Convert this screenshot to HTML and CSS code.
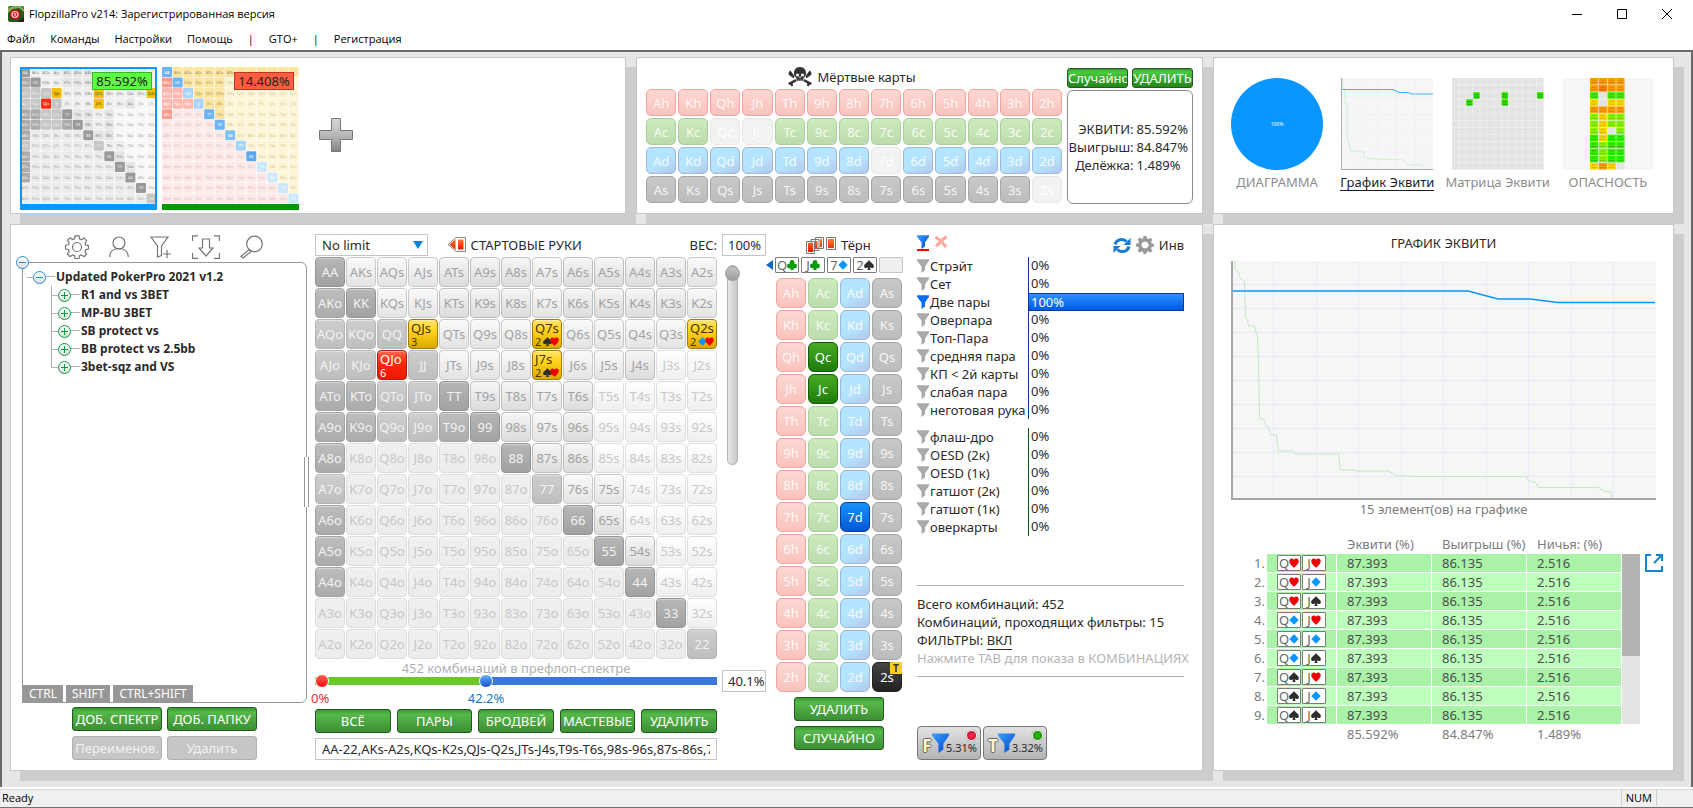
FILE: index.html
```html
<!DOCTYPE html>
<html lang="ru">
<head>
<meta charset="utf-8">
<title>FlopzillaPro v214</title>
<link rel="stylesheet" href="styles.css">
</head>
<body>
<svg class="defs" aria-hidden="true">
  <defs>
    <linearGradient id="g-blue" x1="0" y1="0" x2="1" y2="1"><stop offset="0" stop-color="#3aa0ff"/><stop offset="1" stop-color="#0046c8"/></linearGradient>
    <linearGradient id="g-red" x1="0" y1="0" x2="0" y2="1"><stop offset="0" stop-color="#ff7a2a"/><stop offset="1" stop-color="#e01800"/></linearGradient>
    <linearGradient id="g-plus" x1="0" y1="0" x2="0" y2="1"><stop offset="0" stop-color="#d6d6d6"/><stop offset=".5" stop-color="#b8b8b8"/><stop offset="1" stop-color="#858585"/></linearGradient>
  </defs>
  <symbol id="h" viewBox="0 0 10 10"><path fill="#f00000" d="M5 9.8C3.500 8 .3 6 .3 3.200 .3 .2 3.900-.3 5 2 6.100-.3 9.700.2 9.700 3.200 9.700 6 6.500 8 5 9.800z"/></symbol>
  <symbol id="d" viewBox="0 0 10 10"><path fill="#0a96ff" d="M5 .3 9.700 5 5 9.700.3 5z"/></symbol>
  <symbol id="s" viewBox="0 0 10 10"><path fill="#2e2e2e" d="M5 .1C6 2 9.900 4 9.900 6.200c0 2-2.700 2.500-4.100 1.100l.8 2.600H3.400l.8-2.600C2.800 8.700.1 8.200.1 6.200.1 4 4 2 5 .1z"/></symbol>
  <symbol id="c" viewBox="0 0 10 10"><g fill="#0a9a0a"><circle cx="5" cy="2.500" r="2.400"/><circle cx="2.400" cy="6" r="2.400"/><circle cx="7.600" cy="6" r="2.400"/><path d="M4.200 4h1.600l.9 5.900H3.300z"/></g></symbol>
  <symbol id="funnel" viewBox="0 0 12 14"><path d="M0 .3h12v1.400L8 7.500v4l-3.500 2.500V7.500L0 1.700z"/></symbol>
</svg>

<header class="titlebar">
  <svg class="logo" viewBox="0 0 16 16"><rect width="16" height="16" rx="2" fill="#1e5a1e"/><path d="M0 2 5 0h8l3 3v3L11 2 5 3 0 7z" fill="#7fae4e"/><circle cx="7" cy="8.500" r="5.500" fill="#b01616"/><circle cx="7" cy="8.500" r="3.600" fill="#f4dcdc"/><circle cx="7" cy="8.500" r="2.400" fill="#d02020"/><path d="M7 7v3" stroke="#fff"/><path d="M9 16l7-5v5z" fill="#2f2015"/></svg>
  <span class="title">FlopzillaPro v214: Зарегистрированная версия</span>
  <div class="winctl">
    <button aria-label="Свернуть"><svg viewBox="0 0 12 12"><path d="M1 6.500h10"/></svg></button>
    <button aria-label="Развернуть"><svg viewBox="0 0 12 12"><path d="M1.500 1.500h9v9h-9z"/></svg></button>
    <button aria-label="Закрыть"><svg viewBox="0 0 12 12"><path d="M1 1l10 10M11 1L1 11"/></svg></button>
  </div>
</header>
<nav class="menu">
  <button>Файл</button><button>Команды</button><button>Настройки</button><button>Помощь</button><span>|</span><button>GTO+</button><span>|</span><button>Регистрация</button>
</nav>

<main class="work">
  <section class="panel players">
    <button class="thumb selected"><svg id="thumb1" viewBox="0 0 137 137"></svg><span class="eq eq-win">85.592%</span></button>
    <button class="thumb"><svg id="thumb2" viewBox="0 0 137 137"></svg><span class="eq eq-lose">14.408%</span></button>
    <button class="add" aria-label="Добавить"><svg viewBox="0 0 34 34"><path d="M12.500.500h9v12h12v9h-12v12h-9v-12H.500v-9h12z" fill="url(#g-plus)" stroke="#777"/></svg></button>
  </section>

  <section class="panel dead">
    <div class="deadmain">
      <h2 class="deadtitle"><svg viewBox="0 0 24 20"><g fill="#333"><path d="M12 0C7.500 0 6 3 6 6.500c0 2 .4 3 1.500 3.800l1 .7v3h7v-3l1-.7C17.600 9.500 18 8.500 18 6.500 18 3 16.500 0 12 0z"/><path d="M3 14.500 7.500 12l1 2.200L4.600 16.400l.6 2-1.600 1.200-1-1.600-2.200-.4.300-2zM21 14.500 16.500 12l-1 2.200 3.900 2.200-.6 2 1.600 1.200 1-1.600 2.200-.4-.3-2z"/><path d="M1 4.500l1.500-.8 1.500 1.800 2 3v3L3 9.500.500 7.500zM23 4.500l-1.500-.8L20 5.500l-2 3v3l3-2 2.500-2z"/></g><g fill="#fff"><circle cx="9.500" cy="8" r="1.600"/><circle cx="14.500" cy="8" r="1.600"/><path d="M12 9l1 2h-2zM9.800 12.500h.7V14h-.7zM11.700 12.500h.7V14h-.7zM13.600 12.500h.7V14h-.7z"/></g></svg>Мёртвые карты</h2>
      <div class="deadgrid" id="dead"></div>
    </div>
    <div class="deadside">
      <div class="pair"><button class="btn bright">Случайно</button><button class="btn bright">УДАЛИТЬ</button></div>
      <dl class="eqbox"><dt>ЭКВИТИ:</dt><dd>85.592%</dd><dt>Выигрыш:</dt><dd>84.847%</dd><dt>Делёжка:</dt><dd>1.489%</dd></dl>
    </div>
  </section>

  <section class="panel views">
    <button class="view"><svg viewBox="0 0 92 92"><circle cx="46" cy="46" r="46" fill="#0a96ff"/><text x="46" y="48" font-size="5" fill="#fff" text-anchor="middle">100%</text></svg><span>ДИАГРАММА</span></button>
    <button class="view active"><svg viewBox="0 0 92 92"><path fill="#f6f6f6" d="M0 0h92v92H0z"/><path d="M19 0v92M37 0v92M55 0v92M74 0v92M0 19h92M0 37h92M0 55h92M0 74h92" stroke="#efeff5"/><path d="M1 0l1 9 2 4v12l2 1v30l2 9 2 8h13v7l12 1 28 1 4 5h14l3 4" fill="none" stroke="#d3ecd3"/><path d="M0 11.500h52l6 3h9l4 1.500h21" fill="none" stroke="#4db2f5" stroke-width="1.200"/><path d="M.5 0v91.500H92" fill="none" stroke="#aaa"/></svg><span>График Эквити</span></button>
    <button class="view"><svg id="matrix" viewBox="0 0 92 92"></svg><span>Матрица Эквити</span></button>
    <button class="view"><svg id="danger" viewBox="0 0 92 92"></svg><span>ОПАСНОСТЬ</span></button>
  </section>

  <section class="panel editor">
    <div class="treecol">
      <div class="tools">
        <button aria-label="Настройки"><svg viewBox="0 0 24 24"><circle cx="12" cy="12" r="4.500"/><path d="M10 .8h4l.5 3 2 .9 2.600-1.700 2.500 2.700-1.600 2.500.8 2 2.700.3v3.600l-2.800.5-.8 2 1.600 2.500-2.500 2.600-2.500-1.700-2 .8-.5 2.700h-4l-.5-2.800-2-.8-2.500 1.700-2.600-2.600L4.100 16.500l-.9-2-2.600-.5v-3.800l2.700-.4.900-2L2.500 5.300l2.600-2.500 2.400 1.700 2-.8z"/></svg></button>
        <button aria-label="Профиль"><svg viewBox="0 0 20 24"><circle cx="10" cy="8" r="6"/><path d="M.8 22c0-5 3-8.500 9.200-8.500s9.200 3.500 9.200 8.500"/></svg></button>
        <button aria-label="Новый фильтр"><svg viewBox="0 0 22 24"><path d="M1 2h17l-6.500 9v9.500L7.500 22V11zM17 15v8M13 19h8"/></svg></button>
        <button aria-label="Импорт"><svg viewBox="0 0 28 24"><path d="M.5 6V.8H6M22 .8h5.500V6M27.500 18v5.300H22M6 23.300H.5V18M10.500 4h7v9h3.500l-7 8-7-8h3.500z"/></svg></button>
        <button aria-label="Поиск"><svg viewBox="0 0 24 24"><circle cx="14.500" cy="9" r="7.800"/><path d="M9 14.500l2 2-8 6.500-2-1.500z"/></svg></button>
      </div>
      <div class="treebox">
        <button class="node minus corner" aria-label="Свернуть всё"></button>
        <ul class="tree">
          <li class="root"><button class="node minus" aria-label="Свернуть"></button><b>Updated PokerPro 2021 v1.2</b>
            <ul>
              <li><button class="node plus" aria-label="Развернуть"></button><b>R1 and vs 3BET</b></li>
              <li><button class="node plus" aria-label="Развернуть"></button><b>MP-BU 3BET</b></li>
              <li><button class="node plus" aria-label="Развернуть"></button><b>SB protect vs</b></li>
              <li><button class="node plus" aria-label="Развернуть"></button><b>BB protect vs 2.5bb</b></li>
              <li><button class="node plus" aria-label="Развернуть"></button><b>3bet-sqz and VS</b></li>
            </ul>
          </li>
        </ul>
        <div class="keys"><span>CTRL</span><span>SHIFT</span><span>CTRL+SHIFT</span></div>
        <i class="grip"></i>
      </div>
      <div class="treebtns">
        <button class="btn">ДОБ. СПЕКТР</button><button class="btn">ДОБ. ПАПКУ</button>
        <button class="btn off" disabled>Переименов.</button><button class="btn off" disabled>Удалить</button>
      </div>
    </div>

    <div class="rangecol">
      <div class="rangehead">
        <div class="limitbox"><select class="limit" aria-label="Лимит"><option>No limit</option></select></div>
        <h2><svg viewBox="0 0 18 16"><path d="M8 .5h9.500v14H8l-8-7z" fill="#fff" stroke="#888"/><path d="M7.500 2v11L1.500 7.500z" fill="url(#g-red)"/><path d="M10 2.500h5.500v10H10z" fill="url(#g-red)"/></svg>СТАРТОВЫЕ РУКИ</h2>
        <label for="weight">ВЕС:</label>
      </div>
      <div class="hands" id="hands"></div>
      <p class="combos">452 комбинаций в префлоп-спектре</p>
      <div class="dual">
        <input type="range" class="low" min="0" max="1000" value="0" aria-label="Нижняя граница">
        <input type="range" class="high" min="0" max="1000" value="422" aria-label="Верхняя граница">
      </div>
      <div class="duallabels"><span class="lo">0%</span><span class="hi">42.2%</span></div>
      <div class="rangebtns"><button class="btn">ВСЁ</button><button class="btn">ПАРЫ</button><button class="btn">БРОДВЕЙ</button><button class="btn">МАСТЕВЫЕ</button><button class="btn">УДАЛИТЬ</button></div>
      <input class="field rangetext" aria-label="Спектр" value="AA-22,AKs-A2s,KQs-K2s,QJs-Q2s,JTs-J4s,T9s-T6s,98s-96s,87s-86s,76s-75s,65s,54s">
    </div>

    <div class="weightcol">
      <input class="field" id="weight" value="100%">
      <input type="range" class="vert" min="0" max="100" value="0" aria-label="Вес">
      <input class="field percent" aria-label="Процент рук" value="40.1%">
    </div>

    <div class="boardcol">
      <h2 class="street"><svg viewBox="0 0 30 17"><g fill="#fff" stroke="#777"><path d="M9.500.500h8v11h-8zM5 2.500h8v11H5zM.5 4.500h8v12h-8zM20.500.500h9v12h-9z"/></g><g fill="url(#g-red)"><path d="M14 2h2v8h-2zM9.500 4h2v8h-2zM2 6h5v9H2zM22 2h6v9h-6z"/></g></svg>Тёрн</h2>
      <div class="boardcards">
        <button class="back" aria-label="Назад"></button>
        <span class="card">Q<svg><use href="#c"/></svg></span><span class="card">J<svg><use href="#c"/></svg></span><span class="card">7<svg><use href="#d"/></svg></span><span class="card">2<svg><use href="#s"/></svg></span><span class="card empty"></span>
      </div>
      <div class="boardgrid" id="board"></div>
      <button class="btn wide">УДАЛИТЬ</button>
      <button class="btn wide">СЛУЧАЙНО</button>
    </div>

    <div class="filtercol">
      <div class="filterhead">
        <button class="blueline" aria-label="Фильтр"><svg viewBox="0 0 12 14" fill="url(#g-blue)"><use href="#funnel"/></svg></button>
        <button aria-label="Сбросить"><svg class="cross" viewBox="0 0 14 13"><path d="M1.500 2C5 4 9 8 12 12M12.500 1.500C9 4 5 8 2 11.500"/></svg></button>
        <button class="end" aria-label="Обновить"><svg class="sync" viewBox="0 0 18 17"><path d="M2 7.500C3.500 2 10.500 1 13.500 4.500M16 9.500C14.500 15 7.500 16 4.500 12.500" fill="none" stroke="#1a7ad2" stroke-width="3"/><path d="M17.500 1v7h-7zM.5 16V9h7z" fill="#1a7ad2"/></svg></button>
        <button aria-label="Параметры"><svg class="cog" viewBox="0 0 18 18"><path fill="#999" fill-rule="evenodd" d="M7.500 0h3l.5 2.500 1.500.6L14.600 1.700l1.900 2-1.400 2.100.7 1.600 2.200.4v2.800l-2.300.5-.7 1.500 1.400 2.100-2 2-2.100-1.400-1.600.7-.4 2.200H7.600l-.5-2.300-1.500-.7-2.100 1.400-2-2 1.400-2.100-.6-1.500L0 10.500V7.700l2.400-.5.600-1.500-1.400-2.100 2-2L5.700 3l1.400-.6zM9 5.500a3.500 3.500 0 1 0 .1 0z"/></svg></button>
        <span>Инв</span>
      </div>
      <ul class="filters made" id="made"></ul>
      <ul class="filters draws" id="draws"></ul>
      <div class="summary">
        <p>Всего комбинаций: 452</p>
        <p>Комбинаций, проходящих фильтры: 15</p>
        <p>ФИЛЬТРЫ: <a href="#">ВКЛ</a></p>
        <p class="hint">Нажмите ТАВ для показа в КОМБИНАЦИЯХ</p>
      </div>
      <div class="ftbtns">
        <button class="ft"><b>F</b><svg viewBox="0 0 12 14" fill="url(#g-blue)"><use href="#funnel"/></svg><i class="led red"></i><span>5.31%</span></button>
        <button class="ft"><b>T</b><svg viewBox="0 0 12 14" fill="url(#g-blue)"><use href="#funnel"/></svg><i class="led green"></i><span>3.32%</span></button>
      </div>
    </div>
  </section>

  <section class="panel chartpanel">
    <h2>ГРАФИК ЭКВИТИ</h2>
    <svg class="chart" viewBox="0 0 425 239" preserveAspectRatio="none">
      <path d="M0 0h425v239H0z" fill="#f6f6f6"/>
      <path d="M42.500 0v238M85.500 0v238M127.500 0v238M170.500 0v238M212.500 0v238M255.500 0v238M297.500 0v238M340.500 0v238M382.500 0v238M0 23.500h425M0 47.500h425M0 71.500h425M0 95.500h425M0 119.500h425M0 143.500h425M0 167.500h425M0 191.500h425M0 215.500h425" stroke="#e9e9f8"/>
      <path d="M3.500 0 4.500 9l3 2 2 7 4 2 1 37 2 2 1 6h6l2 8 1 2 1 27 1 55 1 1h3l2 6 3 2 2 8h6l2 16h14l2 3h44l2 16h14l2 1h31l5 2 3 3h15l1 .5h115l2 4 7 2 3 5h60l6 4h6l2 6" fill="none" stroke="#c3e6c3"/>
      <path d="M2 30h235l30 8h32l28 3.500h97" fill="none" stroke="#0a96ff" stroke-width="1.500"/>
      <path d="M1 0v238h424" fill="none" stroke="#a6a6a6" stroke-width="2"/>
    </svg>
    <p class="caption">15 элемент(ов) на графике</p>
    <div class="results">
      <table>
        <thead><tr><th></th><th></th><th>Эквити (%)</th><th>Выигрыш (%)</th><th>Ничья: (%)</th></tr></thead>
        <tbody id="rows"></tbody>
        <tfoot><tr><td></td><td></td><td>85.592%</td><td>84.847%</td><td>1.489%</td></tr></tfoot>
      </table>
      <div class="scroll"><i></i></div>
      <button class="popout" aria-label="Открыть отдельно"><svg viewBox="0 0 18 18"><path d="M6 1H1v16h16v-5M17 7V1h-6M17 1 9 9" fill="none" stroke="#1583d4" stroke-width="2"/></svg></button>
    </div>
  </section>
</main>

<footer class="status"><span>Ready</span><span class="num">NUM</span></footer>
<script src="script.js"></script>
</body>
</html>
```
FILE: styles.css
```css
* { box-sizing: border-box; }
body { margin: 0; min-height: 100vh; display: flex; flex-direction: column; background: #fff; color: #2a2a2a; font: 13px/18px "Noto Sans", "Open Sans", sans-serif; }
button { font: inherit; color: inherit; padding: 0; margin: 0; border: 0; background: none; }
input, select { font: inherit; color: inherit; margin: 0; }
h2, p, ul, dl, dd { margin: 0; padding: 0; font-size: 13px; font-weight: 400; list-style: none; }
svg { display: block; flex: none; }
.defs { position: absolute; width: 0; height: 0; }

.titlebar { display: flex; align-items: center; height: 28px; padding: 0 20px 0 8px; gap: 5px; color: #000; font: 11px/16px "Open Sans", sans-serif; }
.logo { width: 16px; height: 16px; }
.winctl { display: flex; gap: 33px; margin-left: auto; }
.winctl svg { width: 12px; height: 12px; fill: none; stroke: #000; }
.menu { display: flex; align-items: center; height: 22px; padding: 0 8px 0 7px; gap: 15px; color: #000; font: 11px/16px "Open Sans", sans-serif; }

.work { flex: 1; display: grid; grid-template-columns: 616fr 567fr 461fr; grid-template-rows: auto 1fr; gap: 10px; padding: 5px 17px 16px 8px; background: #e6e6e6; border: 2px solid #696969; border-bottom: 0; box-shadow: inset 0 1px #f0f0f0; }
.panel { min-width: 0; background: #fff; border: 1px solid #c8c8c8; box-shadow: 10px 10px 0 #cdcdcd; }

.players { display: flex; align-items: flex-start; gap: 5px; padding: 9px 9px 0; }
.thumb { position: relative; width: 137px; height: 143px; border-bottom: 6px solid #090; overflow: hidden; }
.thumb svg { width: 137px; height: 137px; }
.thumb.selected::after { content: ""; position: absolute; inset: 0; border: 2px solid #0a96ff; border-bottom: 0; }
.thumb.selected { border-color: #0a96ff; }
.thumb text { font: 4px "Noto Sans", sans-serif; text-anchor: middle; }
.eq { position: absolute; top: 5px; right: 5px; width: 60px; height: 18px; line-height: 16px; border: 1px solid; text-align: center; color: #222; }
.eq-win { background: #5cff40; border-color: #38b828; }
.eq-lose { background: #ff5c40; border-color: #b83828; }
.add { margin: 51px 0 0 15px; }
.add svg { width: 34px; height: 34px; }

.dead { display: flex; gap: 5px; padding: 9px; }
.deadmain { flex: 416; }
.deadside { flex: 126; }
.deadtitle { display: flex; justify-content: center; align-items: center; gap: 5px; height: 20px; margin-bottom: 2px; padding-right: 4px; }
.deadtitle svg { width: 24px; height: 20px; }
.deadgrid { display: grid; grid-template-columns: repeat(13, 1fr); grid-auto-rows: 27px; gap: 2px; }
.deadside .pair { display: grid; grid-template-columns: 1fr 1fr; gap: 4px; padding-top: 1px; }
.deadside .btn { height: 20px; line-height: 17px; }
.eqbox { display: grid; grid-template-columns: auto auto; justify-content: end; align-content: center; column-gap: 3px; height: 114px; margin-top: 2px; padding-right: 4px; border: 1px solid #8c8c8c; border-radius: 6px; }
.eqbox dt { text-align: right; }

.btn { height: 24px; border: 1px solid #24591d; border-radius: 3px; background: linear-gradient(#3a9c32, #55b84a 20%, #3d8f34); color: #fff; line-height: 20px; white-space: nowrap; overflow: hidden; box-shadow: inset 0 1px #3f9a36; }
.btn.bright { background: linear-gradient(#35b52c, #49c93c 20%, #23841b); }
.btn.off { border-color: #b0b0b0; background: #c6c6c6; color: #f2f2f2; box-shadow: none; }

.cell { min-width: 0; border: 1px solid; border-radius: 5px; line-height: 20px; color: #fffd; }
.cell.ch { background: linear-gradient(#ffd8d2, #f9c3be); border-color: #f0a3a1; }
.cell.cc { background: linear-gradient(#cdecbc, #bddcae); border-color: #a9cfa0; }
.cell.cd { background: linear-gradient(150deg, #b4e4ff 55%, #b4c6ee); border-color: #9bb8d4; }
.cell.cs { background: linear-gradient(#c8c8c8, #bcbcbc); border-color: #a6a6a6; }
.cell.none { background: #f2f2f2; border-color: #e8e8e8; color: #fff; }
.cell.on { color: #fff; position: relative; }
.cell.cc.on { background: linear-gradient(#48ac22, #1d7c0a); border-color: #155a08; }
.cell.cd.on { background: linear-gradient(#1591fb, #0557d6); border-color: #0a3f92; }
.cell.cs.on { background: linear-gradient(#444, #222); border-color: #222; }
.tag { position: absolute; top: -1px; right: -1px; width: 12px; height: 12px; background: #ffcc22; color: #333; font-size: 10px; font-weight: 700; line-height: 12px; text-align: center; }

.views { display: flex; justify-content: space-around; align-items: flex-start; padding: 20px 10px 0 8px; }
.view { display: flex; flex-direction: column; align-items: center; width: 104px; gap: 4px; color: #8c8c8c; white-space: nowrap; }
.view svg { width: 92px; height: 92px; }
.view span { line-height: 16px; border-bottom: 1px solid transparent; }
.view.active span { color: #1c1c1c; border-color: #1c1c1c; }
.view text { font-family: "Noto Sans", sans-serif; }

.editor { grid-column: 1 / 3; display: grid; grid-template-columns: 293fr 407fr 44fr 151fr 267fr; padding: 9px 18px 0 11px; }
.editor > div { min-width: 0; }
.treecol { padding-right: 8px; }
.tools { display: flex; justify-content: space-between; padding: 1px 43px 0; margin-bottom: 3px; }
.tools svg { height: 24px; fill: none; stroke: #757575; stroke-width: 1.2; }
.treebox { position: relative; display: flex; flex-direction: column; height: 441px; border: 1px solid #979797; border-radius: 0 6px 6px 0; }
.node { position: relative; flex: none; width: 13px; height: 13px; border: 1px solid #2490cc; border-radius: 50%; background: linear-gradient(#fff, #ddd); }
.node.plus { border-color: #0a9a3c; }
.node::before, .plus::after { content: ""; position: absolute; left: 2px; top: 5px; width: 7px; height: 1px; background: #2490cc; }
.plus::before, .plus::after { background: #0a9a3c; }
.plus::after { left: 5px; top: 2px; width: 1px; height: 7px; }
.node.corner { position: absolute; left: -7px; top: -7px; }
.tree { flex: 1; padding: 5px 0 0 4px; }
.tree b { font-size: 12px; line-height: 18px; }
.tree li { display: flex; flex-wrap: wrap; align-items: center; }
.tree .root::before { content: ""; width: 6px; border-top: 1px solid #b0b0b0; }
.root > b::before { content: ""; display: inline-block; width: 9px; margin-right: 1px; border-top: 1px solid #b0b0b0; vertical-align: 4px; }
.root ul { width: 100%; margin-left: 24px; background: linear-gradient(#b0b0b0, #b0b0b0) 0 0 / 1px 81px no-repeat; }
.root ul li { height: 18px; }
.root ul li::before { content: ""; width: 7px; border-top: 1px solid #b0b0b0; }
.root ul b::before { content: ""; display: inline-block; width: 9px; margin-right: 1px; border-top: 1px solid #b0b0b0; vertical-align: 4px; }
.keys { display: flex; gap: 3px; }
.keys span { height: 17px; padding: 0 6px; background: #979797; color: #fff; font-size: 12px; line-height: 17px; }
.grip { position: absolute; right: -3px; top: 194px; width: 5px; height: 50px; background: #fff; border: solid #979797; border-width: 0 1px; }
.treebtns { display: grid; grid-template-columns: 90px 90px; justify-content: center; gap: 5px; margin-top: 4px; }

.rangecol { padding-right: 5px; }
.rangehead { display: flex; align-items: center; justify-content: space-between; height: 22px; margin-bottom: 1px; }
.rangehead h2 { display: flex; align-items: center; gap: 5px; margin-right: 88px; }
.rangehead h2 svg { width: 18px; height: 16px; }
.limit, .field { height: 22px; border: 1px solid #c4c4c4; border-radius: 0; background: #fff; padding: 0 6px; min-width: 0; outline: 0; }
.limitbox { position: relative; height: 22px; }
.limitbox::after { content: ""; position: absolute; right: 5px; top: 7px; border: solid transparent; border-width: 8px 5px 0; border-top-color: #0a84d4; pointer-events: none; }
.limit { width: 113px; appearance: none; }
.hands { display: grid; grid-template-columns: repeat(13, 1fr); grid-auto-rows: 30px; gap: 1px; }
.hands .cell { border-radius: 4px; color: #a2a2a2; line-height: 26px; box-shadow: inset 0 1px #fff6; }
.hands .k-d { background: linear-gradient(#b6b6b6, #a2a2a2); border-color: #939393; }
.hands .k-n { background: linear-gradient(#bdbdbd, #ababab); border-color: #a2a2a2; }
.hands .k-m { background: linear-gradient(#cecece, #bebebe); border-color: #b4b4b4; }
.hands .k-d, .hands .k-n, .hands .k-m { color: #f2f2f2; }
.hands .k-s { background: linear-gradient(#f6f6f6, #dcdcdc); border-color: #bebebe; }
.hands .k-t { background: linear-gradient(#fafafa, #e4e4e4); border-color: #c8c8c8; }
.hands .k-f { background: linear-gradient(#fff, #efefef); border-color: #dedede; }
.hands .k-o { background: linear-gradient(#f0f0f0, #ececec); border-color: #dcdcdc; }
.hands .k-f, .hands .k-o { color: #c8c8c8; }
.hands .k-Y, .hands .k-R { display: flex; flex-direction: column; justify-content: center; padding: 0 2px; text-align: left; line-height: 14px; color: #443300; }
.hands .k-Y { background: linear-gradient(#ffe36a, #ffd21a 40%, #dca800); border-color: #a07a10; }
.hands .k-R { background: linear-gradient(#ff6a50, #ff2a10 40%, #ee1600); border-color: #a82018; color: #fff; }
.sub { display: flex; align-items: center; height: 13px; font-size: 11px; line-height: 13px; }
.sub svg { width: 9px; height: 9px; margin-right: -2px; }
.sub svg:first-of-type { margin-left: 2px; }
.combos { text-align: center; color: #b0b0b0; }
.dual { position: relative; height: 14px; margin-top: -3px; background: linear-gradient(to right, #68c82c 42%, #3878d8 42%) 0 3px / 100% 8px no-repeat; border-radius: 4px; }
.dual input { position: absolute; inset: 0; width: 100%; height: 14px; appearance: none; background: none; pointer-events: none; }
.dual input::-webkit-slider-thumb { appearance: none; width: 14px; height: 14px; border-radius: 50%; border: 1px solid #fff; pointer-events: auto; }
.low::-webkit-slider-thumb { background: linear-gradient(#ff6050, #f01010); }
.high::-webkit-slider-thumb { background: linear-gradient(#62b0ff, #1850c8); }
.duallabels { display: flex; height: 21px; line-height: 20px; }
.lo { width: 39%; color: #e03030; margin-left: -4px; }
.hi { color: #0a7cc8; }
.rangebtns { display: grid; grid-template-columns: repeat(5, 1fr); gap: 6px; }
.rangetext { width: 100%; margin-top: 5px; }

.weightcol { display: flex; flex-direction: column; }
.weightcol .field { width: 100%; padding: 0 0 0 5px; }
.vert { writing-mode: vertical-lr; appearance: none; width: 16px; height: 200px; margin: 9px 0 0 2px; background: none; }
.vert::-webkit-slider-runnable-track { width: 11px; height: 200px; border: 1px solid #b4b4b4; border-radius: 5px; background: linear-gradient(to right, #e8e8e8, #c8c8c8); }
.vert::-webkit-slider-thumb { appearance: none; width: 15px; height: 15px; margin-left: -3px; border: 1px solid #999; border-radius: 50%; background: linear-gradient(#c4c4c4, #9c9c9c); }
.percent { margin-top: 205px; }

.boardcol { display: flex; flex-direction: column; }
.street { display: flex; align-items: center; gap: 5px; height: 22px; margin: 0 0 1px 40px; }
.street svg { width: 30px; height: 17px; }
.boardcards { display: flex; align-items: center; gap: 2px; }
.back { border: solid transparent; border-width: 5px 7px 5px 0; border-right-color: #0a6cc4; }
.card { display: inline-flex; align-items: center; justify-content: center; width: 24px; height: 16px; border: 1px solid #7c7c7c; border-radius: 1px; background: #fff; color: #666; line-height: 14px; }
.card svg { width: 10px; height: 10px; }
.card.empty { background: #efefef; border-color: #c4c4c4; }
.boardgrid { display: grid; grid-template-columns: repeat(4, 1fr); grid-auto-rows: 30px; gap: 2px; margin: 5px 15px 5px 10px; }
.boardgrid .cell { border-radius: 6px; line-height: 26px; }
.wide { width: 90px; margin-left: 28px; margin-bottom: 5px; }

.filterhead { display: flex; align-items: center; gap: 5px; height: 22px; margin-bottom: 1px; }
.blueline { border-bottom: 2px solid #f00; margin-bottom: 4px; }
.blueline svg { width: 12px; height: 14px; }
.cross { width: 14px; height: 13px; margin-bottom: 7px; stroke: #fba79c; stroke-width: 3; fill: none; }
.filterhead .end { margin-left: auto; }
.sync { width: 18px; height: 17px; }
.cog { width: 18px; height: 18px; }
.filters li { display: flex; align-items: center; height: 18px; }
.filters button { display: flex; align-items: center; gap: 1px; flex: 0 0 111px; line-height: 18px; white-space: nowrap; }
.filters svg { width: 12px; height: 14px; fill: #aaa; }
.filters .on svg { fill: #0a6cf0; }
.filters span { flex: 1; height: 18px; line-height: 17px; padding-left: 2px; border-left: 1px solid #0a3a9a; }
.filters .on span { border: 1px solid #0a3a9a; background: linear-gradient(#2e90ff, #0058e8); color: #fff; line-height: 16px; }
.filters.draws span { border-color: #0a5a1a; }
.draws { margin-top: 9px; }
.summary { margin-top: 49px; padding: 9px 0; border: solid #b0b0b0; border-width: 1px 0; white-space: nowrap; }
.summary a { color: inherit; text-decoration: none; border-bottom: 1px solid; }
.hint { color: #b4b4b4; }
.ftbtns { display: flex; gap: 2px; margin-top: 49px; }
.ft { position: relative; display: flex; align-items: flex-end; width: 64px; height: 34px; padding: 0 2px 5px 4px; border: 1px solid #777; border-radius: 4px; background: linear-gradient(#e2e2e2, #b4b4b4); }
.ft b { width: 10px; color: #fff8d8; font-size: 17px; line-height: 16px; text-shadow: 1px 0 #666, -1px 0 #666, 0 1px #666, 0 -1px #666; }
.ft svg { width: 17px; height: 22px; }
.ft span { font-size: 11px; line-height: 12px; margin-left: -3px; }
.led { position: absolute; top: 3px; right: 3px; width: 11px; height: 11px; border: 1px solid #eee; border-radius: 50%; box-shadow: 0 0 1px #555; }
.led.red { background: radial-gradient(#ff3050, #c00020); }
.led.green { background: radial-gradient(#30c010, #108000); }

.chartpanel { padding: 9px 17px 0; }
.chartpanel h2 { text-align: center; margin-bottom: 9px; }
.chart { width: 100%; height: 239px; }
.caption { text-align: center; color: #7c7c7c; }
.results { display: flex; align-items: flex-start; margin: 17px 0 0 19px; color: #7c7c7c; }
table { flex: 1; width: 100%; border-collapse: separate; border-spacing: 0; table-layout: fixed; }
th, td { height: 19px; padding: 0 0 0 10px; font-weight: 400; text-align: left; line-height: 17px; white-space: nowrap; }
th:first-child, td:first-child { width: 17px; padding: 0 2px 0 0; text-align: right; }
th:nth-child(2) { width: 70px; }
tbody td + td { background: #bfffbd; border-bottom: 1px solid #fff; border-right: 1px solid #fff; color: #4c4c4c; line-height: 16px; }
tbody tr:nth-child(odd) td + td { background: #a9f2a7; }
.duo { display: flex; gap: 1px; }
.scroll { width: 18px; height: 170px; margin-top: 19px; background: #e4e4e4; }
.scroll i { display: block; height: 60%; background: #b4b4b4; }
.popout { margin: 19px -7px 0 5px; }
.popout svg { width: 18px; height: 18px; }

.status { display: flex; align-items: center; height: 21px; padding: 0 36px 0 2px; background: #f0f0f0; border-top: 2px solid #fff; border-bottom: 1px solid #707070; box-shadow: inset 0 1px #d8d8d8; color: #000; font: 11px/16px "Open Sans", sans-serif; }
.num { margin-left: auto; padding: 0 4px; border: solid #d0d0d0; border-width: 0 1px; }
```
FILE: script.js
```js
const R = 'AKQJT98765432';
const byId = id => document.getElementById(id);
const suit = s => `<svg><use href="#${s}"/></svg>`;

// Two-card hand name for a matrix position: pairs on the diagonal, suited above it.
const hand = (r, c) => r === c ? R[r] + R[r] : r < c ? R[r] + R[c] + 's' : R[c] + R[r] + 'o';

const states = [
  'dtttssstsssst', 'ndttssstsssst', 'mmmYtttYttttY', 'mmRmtttYttsff', 'nnmmdsstsffff',
  'nnmmndstsffff', 'nooooodssffff', 'moooooomttfff', 'nooooooodsfff', 'noooooooodsff',
  'nooooooooodff', 'ooooooooooodf', 'oooooooooooom'
];
const notes = { QJs: '3', QJo: '6', Q7s: '2' + suit('s') + suit('h'), J7s: '2' + suit('s') + suit('h'), Q2s: '2' + suit('d') + suit('h') };

let html = '';
for (let r = 0; r < 13; r++) for (let c = 0; c < 13; c++) {
  const n = hand(r, c);
  html += `<button class="cell k-${states[r][c]}">${n}${notes[n] ? `<span class="sub">${notes[n]}</span>` : ''}</button>`;
}
byId('hands').innerHTML = html;

const taken = ['Qc', 'Jc', '7d', '2s'];
html = '';
for (const s of 'hcds') for (const r of R) html += `<button class="cell c${s}${taken.includes(r + s) ? ' none' : ''}">${r + s}</button>`;
byId('dead').innerHTML = html;

html = '';
for (const r of R) for (const s of 'hcds') {
  const n = r + s;
  html += `<button class="cell c${s}${taken.includes(n) ? ' on' : ''}">${n}${n === '2s' ? '<span class="tag">T</span>' : ''}</button>`;
}
byId('board').innerHTML = html;

// Miniature range matrices; cells behind the equity badge carry no label
function mini(id, paint) {
  const p = 137 / 13;
  let out = '';
  for (let r = 0; r < 13; r++) for (let c = 0; c < 13; c++) {
    const [bg, fg] = paint(r, c);
    out += `<rect x="${c * p}" y="${r * p}" width="${p - .5}" height="${p - .5}" rx="1" fill="${bg}"/>`;
    if (r > 1 || c < 7) out += `<text x="${c * p + 5}" y="${r * p + 6.5}" fill="${fg}">${hand(r, c)}</text>`;
  }
  byId(id).innerHTML = out;
}
const grays = { d: ['#9a9a9a', '#eee'], n: ['#ababab', '#eee'], m: ['#c6c6c6', '#eee'], s: ['#e6e6e6', '#888'], t: ['#efefef', '#888'], f: ['#f7f7f7', '#aaa'], o: ['#ececec', '#aaa'], Y: ['#f4c010', '#430'], R: ['#ff2a10', '#fff'] };
mini('thumb1', (r, c) => grays[states[r][c]]);
const yellowReach = [13, 6, 6, 6, 6];
const diag = '#6ab4f4 #6ab4f4 #a8d4f8 #a8d4f8 #6ab4f4 #6ab4f4 #7cc0f6 #a8d4f8 #5aa8f0 #cce8fc #cce8fc #cce8fc #cce8fc'.split(' ');
mini('thumb2', (r, c) => {
  if (r === c) return [diag[r], '#fff'];
  if (r < c) return c < (yellowReach[r] || 0) ? ['#fbe5a0', '#a09060'] : ['#fdf5d6', '#d0c8a0'];
  if (c === 0 && (r === 1 || r === 4)) return ['#ff9a8e', '#fff'];
  return r < 4 ? ['#ffb8b0', '#fff'] : ['#fde9e7', '#e0c0be'];
});

html = '<path fill="#f6f6f6" d="M0 0h92v92H0z"/>';
const p13 = 92 / 13, hot = ['2,3', '2,7', '2,12', '3,2', '3,7'];
for (let r = 0; r < 13; r++) for (let c = 0; c < 13; c++)
  html += `<rect x="${c * p13}" y="${r * p13}" width="${p13 - .5}" height="${p13 - .5}" fill="${hot.includes(r + ',' + c) ? '#33e600' : '#e4e4e4'}"/>`;
for (const h of hot) {
  const [r, c] = h.split(',').map(Number);
  html += `<path d="M${c * p13 + 1} ${r * p13 + 2.5}h4.500M${c * p13 + 1} ${r * p13 + 5}h4.500" stroke="#1a7a00" stroke-width=".7"/>`;
}
byId('matrix').innerHTML = html;

const heat = { O: '#ff9d00', D: '#ff7f00', Y: '#ffd800', L: '#8cf500', G: '#33f000', '-': '#e4e4e4' };
html = '<path fill="#f6f6f6" d="M0 0h92v92H0z"/>';
'OOOO ODOO G-GG Y-YY OOOO LYLL LYLL LY-L GYGG GLGG GLGG GLGG YOY-'.split(' ').forEach((row, r) => {
  [...row].forEach((k, c) => {
    const x = 28 + c * 8.75, y = r * p13;
    html += `<rect x="${x}" y="${y}" width="8.300" height="${p13 - .5}" fill="${heat[k]}"/>`;
    if (k !== '-') html += `<path d="M${x + 2} ${y + 2.2}h4M${x + 1} ${y + 4.800}h6" stroke="#0004" stroke-width=".7"/>`;
  });
});
byId('danger').innerHTML = html;

const filterRow = (name, on) => `<li${on ? ' class="on"' : ''}><button><svg viewBox="0 0 12 14"><use href="#funnel"/></svg>${name}</button><span>${on ? '100%' : '0%'}</span></li>`;
byId('made').innerHTML = ['Стрэйт', 'Сет', 'Две пары', 'Оверпара', 'Топ-Пара', 'средняя пара', 'КП &lt; 2й карты', 'слабая пара', 'неготовая рука'].map((n, i) => filterRow(n, i === 2)).join('');
byId('draws').innerHTML = ['флаш-дро', 'OESD (2к)', 'OESD (1к)', 'гатшот (2к)', 'гатшот (1к)', 'оверкарты'].map(n => filterRow(n)).join('');

byId('rows').innerHTML = ['hh', 'hd', 'hs', 'dh', 'dd', 'ds', 'sh', 'sd', 'ss'].map((k, i) =>
  `<tr><td>${i + 1}.</td><td><span class="duo"><span class="card">Q${suit(k[0])}</span><span class="card">J${suit(k[1])}</span></span></td><td>87.393</td><td>86.135</td><td>2.516</td></tr>`).join('');
```
